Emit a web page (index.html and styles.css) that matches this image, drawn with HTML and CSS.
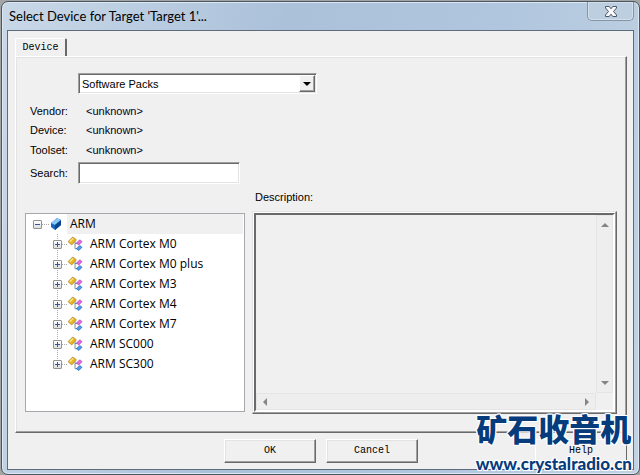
FILE: index.html
```html
<!DOCTYPE html>
<html lang="en">
<head>
  <meta charset="utf-8">
  <title>Select Device for Target 'Target 1'...</title>
  <meta name="viewport" content="width=device-width, initial-scale=1">
  <link rel="stylesheet" href="styles.css">
</head>
<body>
  <svg width="0" height="0" class="symbols" aria-hidden="true">
    <symbol id="family" viewBox="0 0 16 16">
      <path d="M7.500 5v8H12M7.500 7.500H11" fill="none" stroke="#6f8799"/>
      <path d="M0 5.500 5 .5 9 3.500 4 9z" fill="#e8b423" stroke="#a87b18" stroke-width=".7"/>
      <path d="M2 5.500 5.500 2" stroke="#ffe58a" stroke-width="1.500"/>
      <path d="M9 7 12.500 3.500 15 5.500 11.500 9z" fill="#e66de0" stroke="#a83ba9" stroke-width=".7"/>
      <path d="M9 13 12.500 9.500 15 11.500 11.500 15z" fill="#4a9df0" stroke="#1f5fb0" stroke-width=".7"/>
    </symbol>
  </svg>

  <div class="window">
    <div class="titlebar">
      <h1>Select Device for Target 'Target 1'...</h1>
      <button class="close" type="button" aria-label="Close">
        <svg width="12" height="11" viewBox="0 0 12 11">
          <path d="M.5.5H4.200L6 2.800 7.800.5H11.500V2L8.500 5.500 11.500 9V10.500H7.800L6 8.200 4.200 10.500H.5V9L3.500 5.500.5 2z" fill="#f8fafc" stroke="#4b5768"/>
        </svg>
      </button>
    </div>

    <form class="client">
      <button class="tab" type="button">Device</button>

      <div class="panel">
        <div class="fields">
          <div class="combo">
            <select aria-label="Device database">
              <option>Software Packs</option>
            </select>
            <span class="combo-arrow"></span>
          </div>
          <span>Vendor:</span><output>&lt;unknown&gt;</output>
          <span>Device:</span><output>&lt;unknown&gt;</output>
          <span>Toolset:</span><output>&lt;unknown&gt;</output>
          <label for="search">Search:</label><input type="text" id="search">
        </div>

        <div class="details">
          <label class="description-label" for="description">Description:</label>

          <div class="tree">
            <div class="node root">
              <button class="toggle minus" type="button" aria-label="Collapse ARM"></button>
              <svg class="chip" width="12" height="14" viewBox="0 0 12 14">
                <path d="M1 6 7 1 11 3V8L5 13 1 10z" fill="#1767bd"/>
                <path d="M1 6 7 1 11 3 5 8z" fill="#8bc8f5"/>
                <path d="M5 8 11 3V8L5 13z" fill="#0b4590"/>
              </svg>
              <span class="name">ARM</span>
            </div>
            <ul>
              <li class="node"><button class="toggle" type="button" aria-label="Expand"></button><svg class="icon"><use href="#family"/></svg><span>ARM Cortex M0</span></li>
              <li class="node"><button class="toggle" type="button" aria-label="Expand"></button><svg class="icon"><use href="#family"/></svg><span>ARM Cortex M0 plus</span></li>
              <li class="node"><button class="toggle" type="button" aria-label="Expand"></button><svg class="icon"><use href="#family"/></svg><span>ARM Cortex M3</span></li>
              <li class="node"><button class="toggle" type="button" aria-label="Expand"></button><svg class="icon"><use href="#family"/></svg><span>ARM Cortex M4</span></li>
              <li class="node"><button class="toggle" type="button" aria-label="Expand"></button><svg class="icon"><use href="#family"/></svg><span>ARM Cortex M7</span></li>
              <li class="node"><button class="toggle" type="button" aria-label="Expand"></button><svg class="icon"><use href="#family"/></svg><span>ARM SC000</span></li>
              <li class="node"><button class="toggle" type="button" aria-label="Expand"></button><svg class="icon"><use href="#family"/></svg><span>ARM SC300</span></li>
            </ul>
          </div>

          <div class="description">
            <div class="description-inner">
              <textarea id="description" readonly></textarea>
              <div class="scroll vertical"><i class="arrow up"></i><i class="arrow down"></i></div>
              <div class="scroll horizontal"><i class="arrow left"></i><i class="arrow right"></i></div>
            </div>
          </div>
        </div>
      </div>

      <div class="buttons">
        <button type="button">OK</button>
        <button type="button">Cancel</button>
        <button class="help" type="button">Help</button>
      </div>
    </form>
  </div>

  <div class="watermark">
    <div class="watermark-name" lang="zh">矿石收音机</div>
    <div class="watermark-url">www.crystalradio.cn</div>
  </div>
</body>
</html>
```

FILE: styles.css
```css
:root {
  --face: #f0f0f0;
  --light: #ffffff;
  --soft: #e3e3e3;
  --shadow: #a0a0a0;
  --dark: #696969;
  --ui-font: "Liberation Sans", Arial, sans-serif;
  --title-font: Lato, "Open Sans", sans-serif;
  --tree-font: "Open Sans", "Noto Sans", sans-serif;
  --mono-font: "Liberation Mono", monospace;
}

* {
  box-sizing: border-box;
}

body {
  margin: 0;
  padding: 1px 0 0 1px;
  background: #a2a5a3;
  font: 11px/14px var(--ui-font);
  color: #000;
}

button, input, select, textarea {
  font: inherit;
  color: inherit;
  margin: 0;
  padding: 0;
  border: 0;
  border-radius: 0;
}

.symbols {
  position: absolute;
}

.window {
  display: flex;
  flex-direction: column;
  min-height: calc(100vh - 1px);
  padding: 0 5px 4px;
  border: 1px solid #4a5661;
  border-radius: 7px;
  background: linear-gradient(100deg, #c9d8e7, #abc1da 40%, #b0c6de 70%, #c1d2e3);
  box-shadow: inset 0 0 0 1px #dce8f3;
}

/* title bar */
.titlebar {
  display: flex;
  align-items: center;
  justify-content: space-between;
  height: 28px;
  padding-left: 2px;
}

.titlebar h1 {
  margin: 0;
  font: 13px/16px var(--title-font);
}

.close {
  display: flex;
  align-items: center;
  justify-content: center;
  align-self: flex-start;
  width: 47px;
  height: 19px;
  border: 1px solid #8595a5;
  border-top: 0;
  border-radius: 0 0 5px 5px;
  background: #bdcee0;
  box-shadow: inset 0 0 0 1px #d4e1ed;
}

.client {
  flex: 1;
  display: flex;
  flex-direction: column;
  padding: 7px 6px 6px 7px;
  border: 1px solid #5d6b7a;
  background: var(--face);
}

/* tab page */
.tab {
  align-self: flex-start;
  width: 52px;
  height: 18px;
  border: 1px solid var(--light);
  border-right: 2px solid var(--dark);
  border-bottom: 0;
  border-radius: 2px 2px 0 0;
  background: var(--face);
  font: 10px/14px var(--mono-font);
}

.panel {
  flex: 1;
  display: flex;
  flex-direction: column;
  padding: 16px 9px 18px 9px;
  border: 1px solid;
  border-color: var(--light) var(--dark) var(--dark) var(--light);
  box-shadow: inset -1px -1px var(--shadow), inset 1px 1px var(--soft);
}

.fields {
  display: grid;
  grid-template-columns: 40px 1fr;
  grid-template-rows: 28px 19px 20px 20px 25px;
  column-gap: 8px;
  align-items: center;
  padding-left: 5px;
}

.fields output {
  padding-left: 8px;
  color: #00002a;
}

.fields .combo {
  grid-column: 2;
  position: relative;
  width: 239px;
  height: 21px;
  margin-bottom: 7px;
}

.combo select,
.fields input {
  border: 1px solid;
  border-color: var(--shadow) var(--light) var(--light) var(--shadow);
  background: #fff;
  box-shadow: inset 1px 1px var(--dark), inset -1px -1px var(--soft);
}

.combo select {
  appearance: none;
  width: 100%;
  height: 100%;
  padding-left: 3px;
}

.combo-arrow {
  position: absolute;
  top: 2px;
  right: 2px;
  width: 16px;
  height: 17px;
  border: 1px solid;
  border-color: var(--light) var(--dark) var(--dark) var(--light);
  background: var(--face);
  box-shadow: inset -1px -1px var(--shadow);
  pointer-events: none;
}

.combo-arrow::after {
  content: "";
  display: block;
  width: 0;
  margin: 6px 3px;
  border: 4px solid transparent;
  border-top-color: #000;
  border-bottom: 0;
}

.fields input {
  width: 162px;
  height: 22px;
  padding: 0 3px;
}

.details {
  flex: 1;
  display: grid;
  grid-template-columns: 220px 1fr;
  grid-template-rows: 14px 1fr;
  gap: 7px;
  padding-top: 5px;
}

.description-label {
  grid-column: 2;
  padding-left: 3px;
}

/* device tree */
.tree {
  margin: 2px 0;
  border: 1px solid #a5a9ae;
  background: #fff;
  font: 12px/20px var(--tree-font);
}

.tree ul {
  margin: 0;
  padding: 0 0 0 27px;
  list-style: none;
  background: repeating-linear-gradient(#aaa 0 1px, transparent 1px 2px) 31px 0 / 1px 130px no-repeat;
}

.node {
  display: flex;
  align-items: center;
  height: 20px;
}

.root {
  padding: 0 1px 0 7px;
}

.toggle {
  width: 9px;
  height: 9px;
  border: 1px solid #919191;
  border-radius: 1px;
  background:
    linear-gradient(#31579b, #31579b) center / 5px 1px no-repeat,
    linear-gradient(#31579b, #31579b) center / 1px 5px no-repeat,
    linear-gradient(#fff, #ddd);
}

.minus {
  background:
    linear-gradient(#31579b, #31579b) center / 5px 1px no-repeat,
    linear-gradient(#fff, #ddd);
}

/* dotted connector between toggle and icon */
.toggle + svg {
  flex: none;
  box-sizing: content-box;
  padding-left: 6px;
  background: repeating-linear-gradient(90deg, #aaa 0 1px, transparent 1px 2px) 0 center / 6px 1px no-repeat;
}

.toggle + .chip {
  padding-left: 8px;
  background-size: 8px 1px;
}

.icon {
  width: 15px;
  height: 16px;
  margin-right: 7px;
}

.root .name {
  flex: 1;
  margin-left: 5px;
  padding-left: 3px;
  background: var(--face);
}

/* description box */
.description {
  display: grid;
  padding: 1px;
  border: 1px solid;
  border-color: var(--soft) var(--dark) var(--dark) var(--soft);
  box-shadow: inset -1px -1px var(--shadow), inset 1px 1px var(--light);
}

.description-inner {
  display: grid;
  grid-template: 1fr 17px / 1fr 17px;
  border: 2px solid;
  border-color: var(--dark) #fff #fff var(--dark);
}

.description textarea {
  width: 100%;
  height: 100%;
  resize: none;
  background: var(--face);
}

.scroll {
  display: flex;
  align-items: center;
  justify-content: space-between;
  border: 1px solid #e5e5e5;
  background: #eeeeee;
}

.vertical {
  flex-direction: column;
  padding: 7px 0;
}

.horizontal {
  padding: 0 6px;
}

.arrow {
  border: 4px solid transparent;
}

.up {
  border-top: 0;
  border-bottom-color: #858585;
}

.down {
  border-bottom: 0;
  border-top-color: #858585;
}

.left {
  border-left: 0;
  border-right-color: #858585;
}

.right {
  border-right: 0;
  border-left-color: #858585;
}

/* dialog buttons */
.buttons {
  display: flex;
  gap: 10px;
  padding-top: 6px;
  padding-left: 209px;
}

.buttons button {
  width: 92px;
  height: 24px;
  border: 1px solid;
  border-color: var(--light) var(--dark) var(--dark) var(--light);
  background: var(--face);
  box-shadow: inset -1px -1px var(--shadow), inset 1px 1px var(--soft);
  font: 10px/10px var(--mono-font);
}

.buttons .help {
  margin-left: auto;
  border-color: var(--light) var(--dark) var(--face) var(--light);
  box-shadow: none;
}

/* site mark laid over the corner of the dialog */
.watermark {
  position: absolute;
  right: 8px;
  bottom: 4px;
  text-align: center;
  white-space: nowrap;
  color: #063c7c;
  text-shadow: 1px 0 #fff, -1px 0 #fff, 0 1px #fff, 0 -1px #fff, 1px 1px #fff, -1px -1px #fff, 1px -1px #fff, -1px 1px #fff;
  pointer-events: none;
}

.watermark-name {
  margin-bottom: 14px;
  font: 900 31px/30px "Noto Sans CJK SC", sans-serif;
}

.watermark-url {
  font: 900 17px/14px Lato, sans-serif;
}
```
